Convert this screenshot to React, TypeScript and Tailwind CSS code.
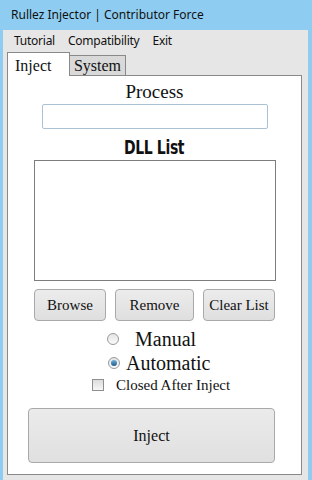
import React from 'react';

const serif = { fontFamily: '"Liberation Serif", "DejaVu Serif", serif' };
const ui = { fontFamily: '"Noto Sans", "Open Sans", sans-serif' };

function Radio({ checked }: { checked?: boolean }) {
  return (
    <span className="flex h-[12px] w-[12px] items-center justify-center rounded-full border border-[#9a9a9a] bg-gradient-to-b from-[#e4e4e4] to-[#fafafa]">
      {checked && (
        <span className="h-[6px] w-[6px] rounded-full bg-gradient-to-b from-[#6fb1e0] to-[#1d5a8a]" />
      )}
    </span>
  );
}

function Btn({ label, w }: { label: string; w: string }) {
  return (
    <button
      className={`${w} h-[32px] rounded-[4px] border border-[#a9a9a9] bg-gradient-to-b from-[#ececec] to-[#dfdfdf] text-[15px] text-[#111]`}
      style={serif}
    >
      {label}
    </button>
  );
}

export default function App() {
  return (
    <div className="flex h-[480px] w-[312px] flex-col overflow-hidden bg-[#8ecdf1]">
      <div className="flex h-[30px] items-center pl-[11px] text-[12px] text-[#111]" style={ui}>
        Rullez Injector | Contributor Force
      </div>
      <div className="ml-[3px] mr-[4px] flex flex-1 flex-col bg-[#e6e6e6]">
        <div
          className="flex h-[22px] items-center gap-[13px] pl-[11px] text-[12px] tracking-[-0.25px] text-[#111]"
          style={ui}
        >
          <span>Tutorial</span>
          <span>Compatibility</span>
          <span>Exit</span>
        </div>
        <div className="flex h-[23px] items-end pl-[4px]" style={serif}>
          <div className="relative z-10 -mb-px flex h-[24px] w-[63px] items-start border border-b-0 border-[#898989] bg-white pl-[7px] pt-[1px] text-[16px] text-[#111]">
            Inject
          </div>
          <div className="flex h-[20px] w-[56px] items-center justify-center border border-b-0 border-l-0 border-[#898989] bg-[#d9d9d9] text-[16px] text-[#111]">
            System
          </div>
        </div>
        <div className="ml-[4px] mr-[6px] flex h-[400px] flex-col items-center border border-[#898989] bg-white">
          <div className="mt-[5px] text-[19px] leading-[22px] text-[#111]" style={serif}>
            Process
          </div>
          <div className="mt-[1px] h-[25px] w-[226px] rounded-[2px] border border-[#abc1d4] bg-white" />
          <div className="mt-[8px] flex h-[20px] items-center justify-center">
            <span
              className="inline-block scale-x-[0.7] text-[20px] font-black leading-[20px] tracking-[-0.5px] text-[#111]"
              style={{ fontFamily: '"DejaVu Sans", sans-serif' }}
            >
              DLL List
            </span>
          </div>
          <div className="mt-[3px] h-[121px] w-[242px] border border-[#7d7d7d] bg-white" />
          <div className="mt-[8px] flex w-[241px] gap-[9px]">
            <Btn label="Browse" w="w-[72px]" />
            <Btn label="Remove" w="w-[79px]" />
            <Btn label="Clear List" w="w-[72px]" />
          </div>
          <div className="mt-[6px] flex w-full items-center pl-[99px]" style={serif}>
            <span className="mr-[16px]"><Radio /></span>
            <span className="text-[20px] leading-[24px] text-[#111]">Manual</span>
          </div>
          <div className="flex w-full items-center pl-[100px]" style={serif}>
            <span className="mr-[6px]"><Radio checked /></span>
            <span className="text-[20px] leading-[24px] text-[#111]">Automatic</span>
          </div>
          <div className="mt-[1px] flex w-full items-center pl-[84px]" style={serif}>
            <span className="mr-[12px] h-[12px] w-[12px] border border-[#8f8f8f] bg-gradient-to-b from-[#dcdcdc] to-[#f6f6f6]" />
            <span className="text-[15px] leading-[18px] text-[#111]">Closed After Inject</span>
          </div>
          <button
            className="mt-[14px] ml-[20px] h-[55px] w-[247px] self-start rounded-[4px] border border-[#a9a9a9] bg-gradient-to-b from-[#ebebeb] to-[#e0e0e0] text-[16px] text-[#111]"
            style={serif}
          >
            Inject
          </button>
        </div>
      </div>
    </div>
  );
}
